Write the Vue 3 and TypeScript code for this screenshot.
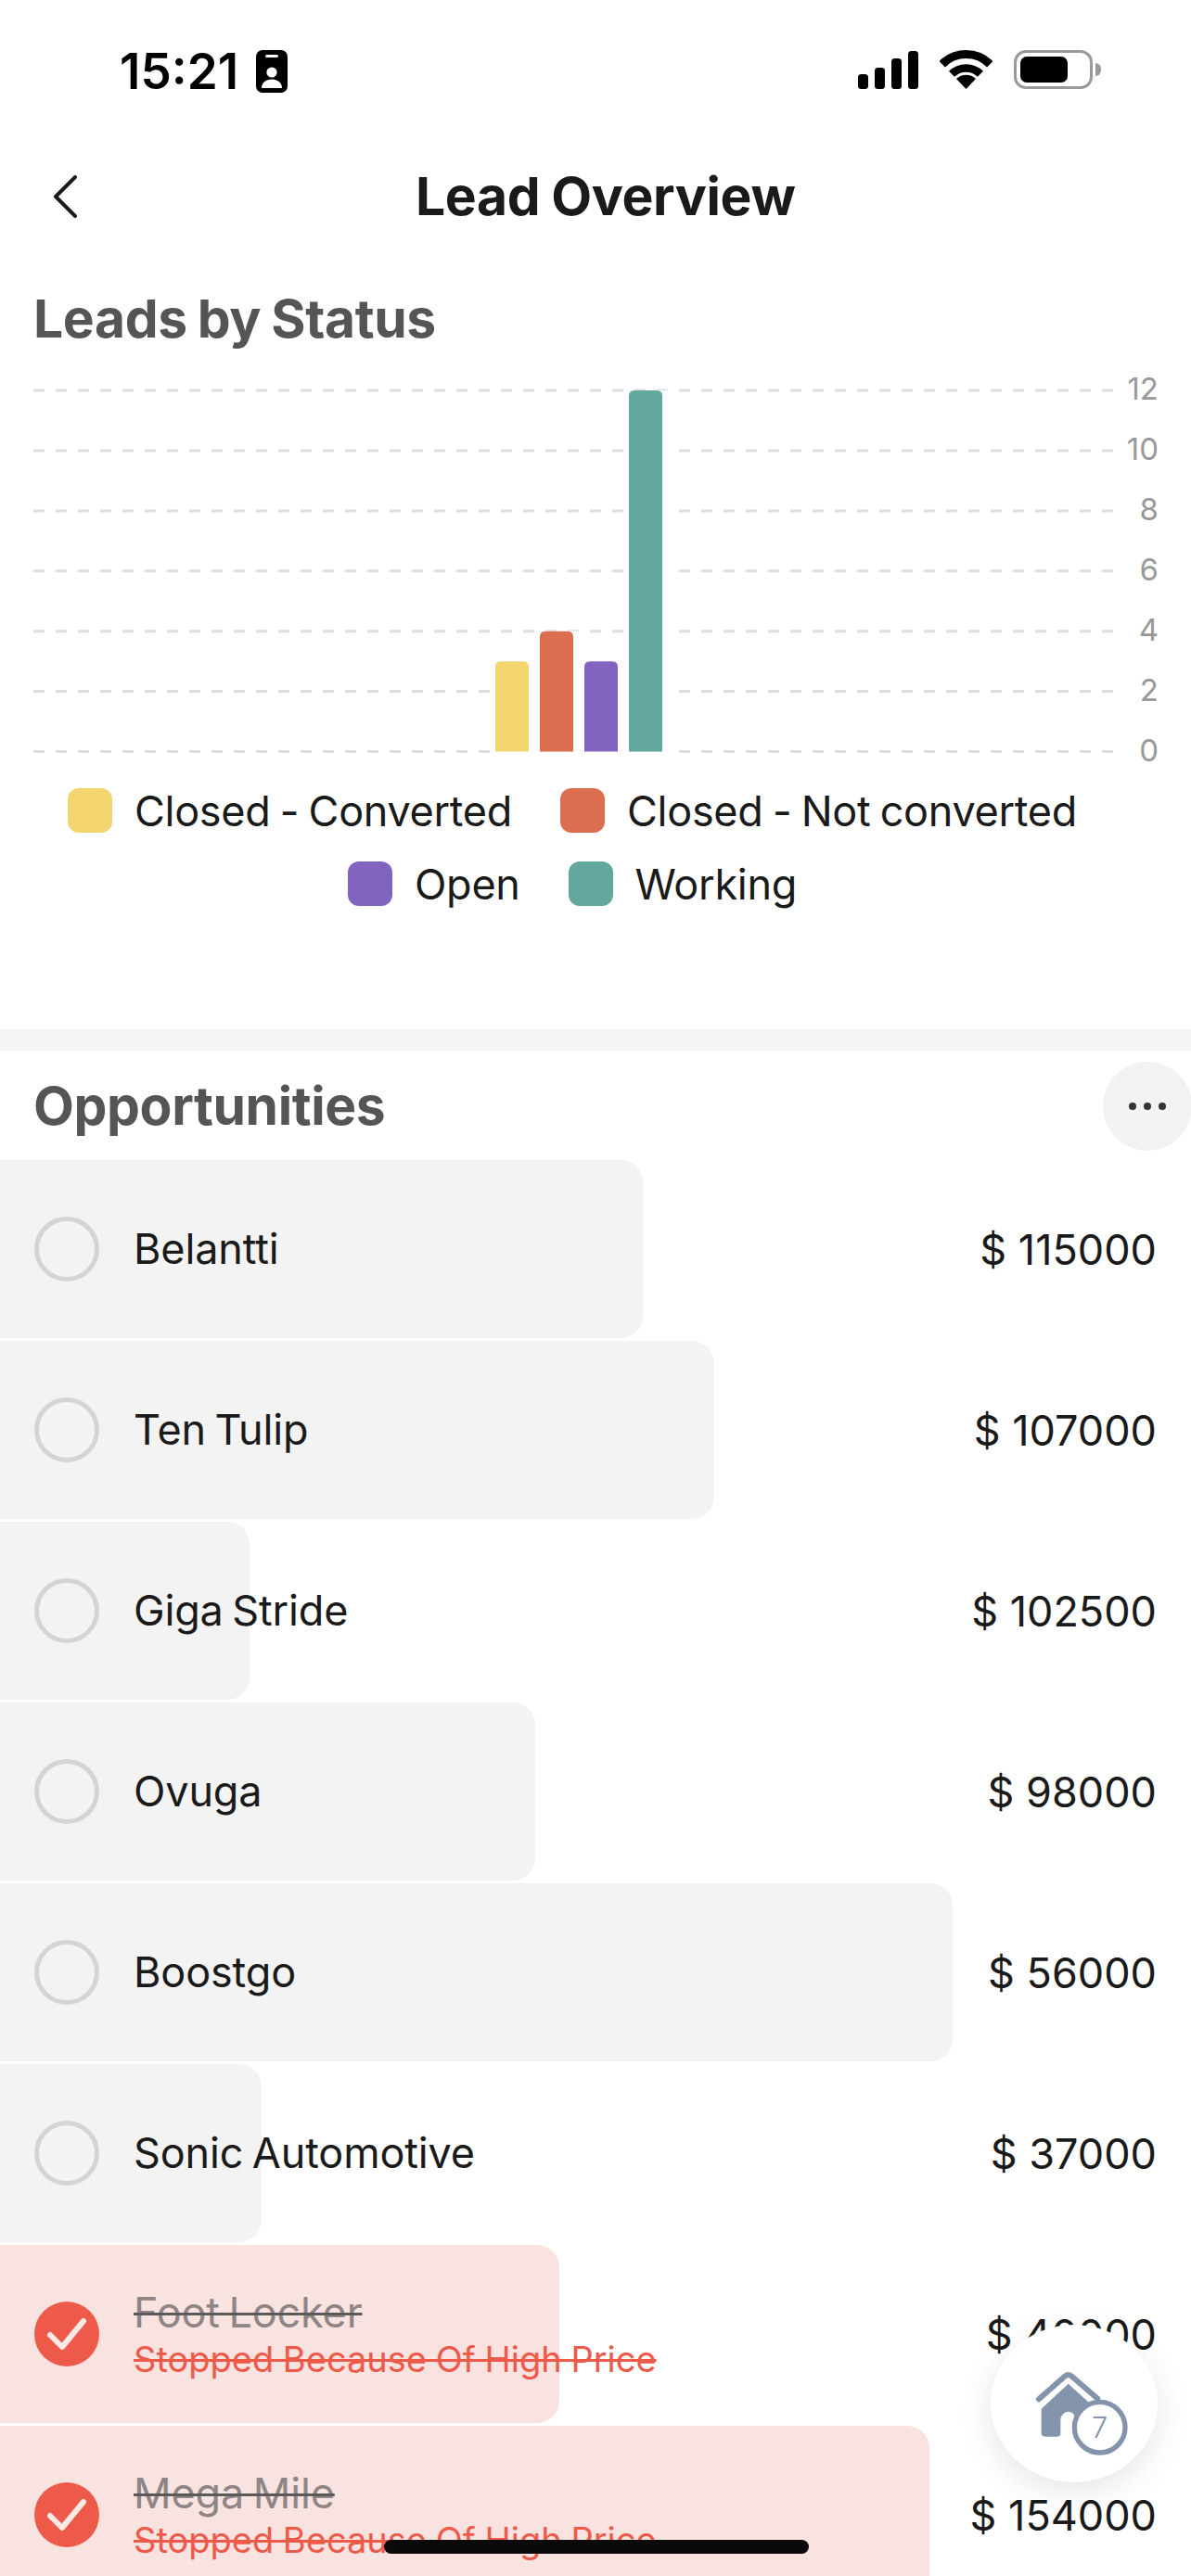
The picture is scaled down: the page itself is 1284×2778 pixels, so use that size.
<template>
  <div class="page">
    <div class="status-bar">
      <div class="status-left">
        <span class="time">15:21</span>
        <svg class="badge-icon" width="34" height="46" viewBox="0 0 34 46">
          <rect width="34" height="46" rx="7" fill="#000" />
          <rect x="10" y="5" width="14" height="3" rx="1.5" fill="#fff" />
          <circle cx="17" cy="24" r="5.6" fill="#fff" />
          <path d="M6 41c0-6 5-9.500 11-9.500s11 3.500 11 9.500z" fill="#fff" />
        </svg>
      </div>
      <div class="status-right">
        <svg width="65" height="41" viewBox="0 0 65 41">
          <rect x="0" y="25" width="11" height="16" rx="3.500" />
          <rect x="18" y="18" width="11" height="23" rx="3.500" />
          <rect x="36" y="8" width="11" height="33" rx="3.500" />
          <rect x="54" y="0" width="11" height="41" rx="3.500" />
        </svg>
        <svg width="57" height="42" viewBox="0 0 57 42">
          <path d="M2.700 15.200a36.500 36.500 0 0 1 51.600 0" fill="none" stroke="#000" stroke-width="9" />
          <path d="M13 25.800a22 22 0 0 1 31 0" fill="none" stroke="#000" stroke-width="8.500" />
          <path d="M28.500 42L18 31a15 15 0 0 1 21 0z" fill="#000" />
        </svg>
        <div class="battery">
          <div class="battery-fill"></div>
          <div class="battery-nub"></div>
        </div>
      </div>
    </div>

    <div class="nav">
      <svg class="back" width="26" height="46" viewBox="0 0 26 46">
        <path d="M23 2L2 23l21 21" fill="none" stroke="#1a1a1a" stroke-width="4" stroke-linecap="round" stroke-linejoin="round" />
      </svg>
      <div class="nav-title">Lead Overview</div>
    </div>

    <div class="section-title chart-title">Leads by Status</div>

    <svg class="chart" width="1284" height="440" viewBox="0 0 1284 440">
      <g v-for="tick in ticks" :key="tick">
        <line x1="36" x2="1200" :y1="tickY(tick)" :y2="tickY(tick)" class="grid-line" />
        <text x="1249" :y="tickY(tick) + 10" text-anchor="end" class="tick-label">{{ tick }}</text>
      </g>
      <g v-for="(bar, index) in bars" :key="bar.label">
        <rect :x="barX(index) - 6" :y="tickY(bar.value)" width="48" :height="tickY(0) - tickY(bar.value) + 2" fill="#fff" />
        <path :d="barPath(bar.value, index)" :fill="bar.color" />
      </g>
    </svg>

    <div class="legend">
      <div v-for="bar in bars" :key="bar.label" class="legend-item">
        <span class="swatch" :style="{ background: bar.color }"></span>
        <span>{{ bar.label }}</span>
      </div>
    </div>

    <div class="band"></div>

    <div class="opp-header">
      <div class="section-title">Opportunities</div>
      <div class="more">
        <svg width="42" height="10" viewBox="0 0 42 10">
          <circle cx="5" cy="5" r="4" fill="#333" />
          <circle cx="21" cy="5" r="4" fill="#333" />
          <circle cx="37" cy="5" r="4" fill="#333" />
        </svg>
      </div>
    </div>

    <div class="rows">
      <div v-for="row in rows" :key="row.name" class="row" :class="{ stopped: row.stopped }">
        <div class="row-bar" :style="{ width: row.barWidth + 'px' }"></div>
        <div v-if="row.stopped" class="check">
          <svg width="70" height="70" viewBox="0 0 70 70">
            <path d="M17 36l13 13 23-28" fill="none" stroke="#fbe9e6" stroke-width="6" stroke-linecap="round" stroke-linejoin="round" />
          </svg>
        </div>
        <div v-else class="radio"></div>
        <div class="row-text">
          <div class="row-name">{{ row.name }}</div>
          <div v-if="row.stopped" class="row-reason">Stopped Because Of High Price</div>
        </div>
        <div class="row-amount">$ {{ row.amount }}</div>
      </div>
    </div>

    <div class="fab">
      <svg width="102" height="93" viewBox="0 0 306 279">
        <path d="M15 97L100 22q10-8 20 0l85 73" fill="none" stroke="#8494ac" stroke-width="18" stroke-linecap="round" />
        <path d="M23 128L110 47l90 81v37h-65a25 28 0 0 0-50 0v43q0 10-10 10H35q-11 0-12-10z" fill="#8494ac" />
        <circle cx="212" cy="188" r="82" fill="#fff" stroke="#8494ac" stroke-width="16" />
        <text x="212" y="222" text-anchor="middle" class="fab-count">7</text>
      </svg>
    </div>

    <div class="home-indicator"></div>
  </div>
</template>

<script setup lang="ts">
interface Bar {
  label: string;
  value: number;
  color: string;
}

interface Row {
  name: string;
  amount: number;
  barWidth: number;
  stopped?: boolean;
}

const ticks = [12, 10, 8, 6, 4, 2, 0];

const bars: Bar[] = [
  { label: 'Closed - Converted', value: 3, color: '#f3d56f' },
  { label: 'Closed - Not converted', value: 4, color: '#dc6e4f' },
  { label: 'Open', value: 3, color: '#8264c0' },
  { label: 'Working', value: 12, color: '#62a89c' },
];

const rows: Row[] = [
  { name: 'Belantti', amount: 115000, barWidth: 693 },
  { name: 'Ten Tulip', amount: 107000, barWidth: 770 },
  { name: 'Giga Stride', amount: 102500, barWidth: 269 },
  { name: 'Ovuga', amount: 98000, barWidth: 577 },
  { name: 'Boostgo', amount: 56000, barWidth: 1027 },
  { name: 'Sonic Automotive', amount: 37000, barWidth: 282 },
  { name: 'Foot Locker', amount: 40000, barWidth: 603, stopped: true },
  { name: 'Mega Mile', amount: 154000, barWidth: 1002, stopped: true },
];

const tickY = (tick: number) => 415.5 - tick * 32.45;
const barX = (index: number) => 534 + index * 48;

const barPath = (value: number, index: number) => {
  const x = barX(index);
  const top = tickY(value);
  return `M${x} ${tickY(0)}V${top + 6}q0-6 6-6h24q6 0 6 6V${tickY(0)}z`;
};
</script>

<style scoped>
.page {
  position: relative;
  width: 1284px;
  height: 2778px;
  overflow: hidden;
  background: #fff;
  font-family: Inter, "Liberation Sans", sans-serif;
  color: #1a1a1a;
}

.status-bar {
  height: 150px;
  box-sizing: border-box;
  padding: 54px 106px 0 129px;
  display: flex;
  justify-content: space-between;
  align-items: flex-start;
}

.status-left {
  display: flex;
  align-items: center;
  gap: 19px;
  height: 46px;
}

.time {
  font-size: 53px;
  line-height: 46px;
  font-weight: 600;
  color: #000;
}

.status-right {
  display: flex;
  align-items: flex-end;
  gap: 23px;
  height: 42px;
}

.battery {
  position: relative;
  width: 85px;
  height: 42px;
  box-sizing: border-box;
  border: 3px solid #9a9a9a;
  border-radius: 13px;
  padding: 4px;
}

.battery-fill {
  width: 51px;
  height: 28px;
  background: #000;
  border-radius: 7px;
}

.battery-nub {
  position: absolute;
  right: -12px;
  top: 11px;
  width: 6px;
  height: 14px;
  background: #9a9a9a;
  border-radius: 0 7px 7px 0;
}

.nav {
  height: 124px;
  display: flex;
  align-items: center;
  padding-left: 58px;
}

.back {
  display: block;
}

.nav-title {
  margin-left: 364px;
  font-size: 57px;
  font-weight: 700;
  line-height: 64px;
  letter-spacing: -0.4px;
  word-spacing: -1px;
  color: #1a1a1a;
}

.section-title {
  font-size: 57px;
  font-weight: 700;
  line-height: 64px;
  letter-spacing: -0.4px;
  word-spacing: -2px;
  color: #555;
}

.chart-title {
  padding: 38px 0 0 36px;
  height: 83px;
}

.chart {
  display: block;
}

.grid-line {
  stroke: #dedede;
  stroke-width: 3;
  stroke-dasharray: 12 12;
}

.tick-label {
  font-size: 33px;
  fill: #999;
}

.legend {
  box-sizing: border-box;
  width: 1284px;
  padding: 15px 50px 133px 0;
  display: flex;
  flex-wrap: wrap;
  justify-content: center;
  gap: 31px 52px;
}

.legend-item {
  display: flex;
  align-items: center;
  gap: 24px;
  height: 48px;
  font-size: 45px;
  letter-spacing: -0.3px;
  word-spacing: -2px;
  color: #1a1a1a;
}

.swatch {
  width: 48px;
  height: 48px;
  border-radius: 12px;
}

.band {
  height: 23px;
  background: #f5f5f5;
}

.opp-header {
  height: 118px;
  box-sizing: border-box;
  padding: 12px 0 10px 36px;
  display: flex;
  justify-content: space-between;
  align-items: center;
}

.more {
  width: 96px;
  height: 96px;
  margin-right: -1px;
  border-radius: 50%;
  background: #f2f2f2;
  display: flex;
  align-items: center;
  justify-content: center;
}

.rows {
  display: flex;
  flex-direction: column;
  gap: 3px;
}

.row {
  position: relative;
  flex: none;
  height: 192px;
  display: flex;
  align-items: center;
  padding: 0 37px 0 37px;
}

.row-bar {
  position: absolute;
  left: 0;
  top: 0;
  bottom: 0;
  background: #f3f3f3;
  border-radius: 0 24px 24px 0;
}

.stopped .row-bar {
  background: #f9e3e1;
}

.radio,
.check {
  position: relative;
  flex: none;
  width: 70px;
  height: 70px;
  box-sizing: border-box;
  border-radius: 50%;
}

.radio {
  border: 5px solid #d4d4d4;
}

.check {
  background: #ee5a4a;
}

.check svg {
  display: block;
}

.row-text {
  position: relative;
  flex: 1;
  margin-left: 37px;
}

.row-name {
  font-size: 45px;
  line-height: 54px;
  letter-spacing: -0.15px;
  word-spacing: -3px;
  color: #1a1a1a;
}

.stopped .row-name {
  color: #8f8585;
  text-decoration: line-through;
  text-decoration-color: #5a5a5a;
  text-decoration-thickness: 3px;
}

.row-reason {
  font-size: 38px;
  line-height: 47px;
  word-spacing: -1px;
  color: #ee5a4a;
  text-decoration: line-through;
  text-decoration-thickness: 3px;
}

.row-amount {
  position: relative;
  font-size: 45px;
  color: #1a1a1a;
}

.fab {
  position: absolute;
  left: 1068px;
  top: 2507px;
  width: 180px;
  height: 170px;
  box-sizing: border-box;
  padding: 19px 0 0 16px;
  border-radius: 50%;
  background: #fff;
  box-shadow: 0 10px 36px rgba(0, 0, 0, 0.1);
  display: flex;
  align-items: center;
  justify-content: center;
}

.fab-count {
  font-size: 92px;
  font-weight: 300;
  fill: #8494ac;
}

.home-indicator {
  position: absolute;
  left: 414px;
  top: 2739px;
  width: 458px;
  height: 15px;
  border-radius: 8px;
  background: #0a0a0a;
}
</style>
